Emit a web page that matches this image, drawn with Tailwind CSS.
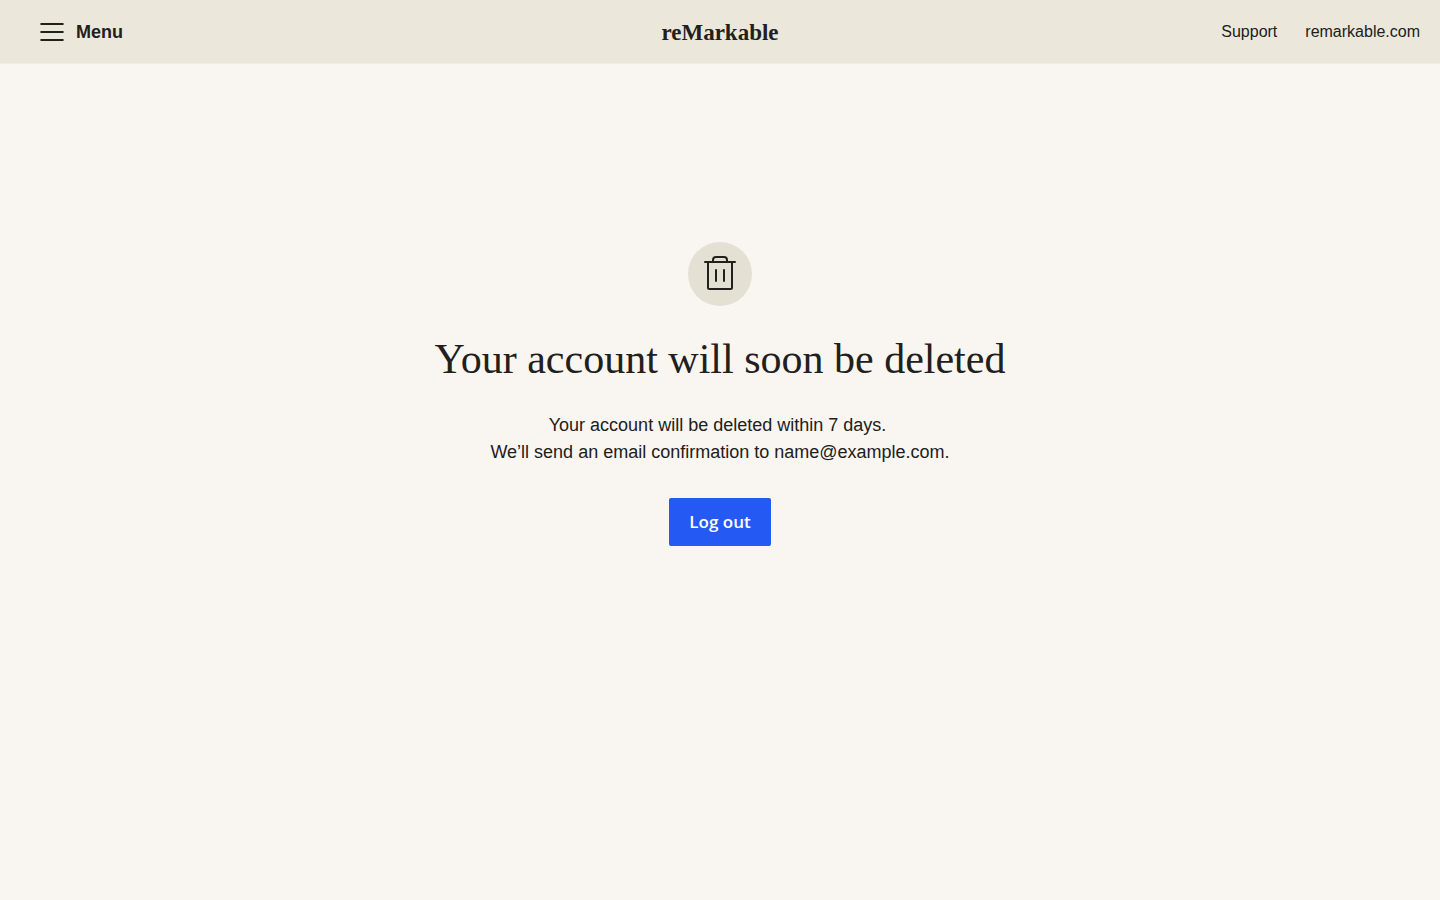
<!DOCTYPE html>
<html lang="en">
<head>
    <meta charset="UTF-8">
    <meta name="viewport" content="width=device-width, initial-scale=1.0">
    <title>Account deleted - reMarkable</title>
    <script src="https://cdn.jsdelivr.net/npm/@tailwindcss/browser@4"></script>
</head>

<body class="min-h-screen bg-[#f9f6f1] text-[#21201c] font-['Liberation_Sans',sans-serif]">
    <!-- Header -->
    <header class="flex items-center h-16 pl-10 pr-5 bg-[#ebe7db] border-b border-[#f1ede4]">
        <div class="flex-1 -mr-5">
            <button type="button" class="flex items-center gap-3 text-lg font-bold">
                <svg class="w-6 h-6" viewBox="0 0 24 24" fill="none" stroke="currentColor" stroke-width="2" stroke-linecap="round" aria-hidden="true">
                    <path d="M1.2 4h21.6M1.2 12h21.6M1.2 20h21.6" />
                </svg>
                Menu
            </button>
        </div>
        <a href="/" class="pt-1 text-[23px] font-bold font-['Liberation_Serif',serif]">reMarkable</a>
        <nav class="flex flex-1 justify-end gap-7 text-base">
            <a href="/support">Support</a>
            <a href="https://remarkable.com">remarkable.com</a>
        </nav>
    </header>

    <!-- Confirmation -->
    <main class="flex flex-col items-center px-4 pt-[178px] pb-12 text-center">
        <div class="flex items-center justify-center w-16 h-16 rounded-full bg-[#e5e0d4]">
            <svg class="w-10 h-10" viewBox="0 0 40 40" fill="none" stroke="currentColor" stroke-width="2" stroke-linecap="round" stroke-linejoin="round" aria-hidden="true">
                <path d="M5 8h30" />
                <path d="M13 8V6a3 3 0 0 1 3-3h8a3 3 0 0 1 3 3v2" />
                <path d="M8 8v25.500a1.500 1.500 0 0 0 1.500 1.500h21a1.500 1.500 0 0 0 1.500-1.500V8" />
                <path d="M16 16v11M24 16v11" />
            </svg>
        </div>
        <h1 class="mt-7 text-[42px] leading-[50px] font-['Liberation_Serif',serif]">Your account will soon be deleted</h1>
        <p class="mt-7 text-lg leading-[27px]">
            Your account will be deleted within 7 days.&nbsp;<br>
            We’ll send an email confirmation to name@example.com.
        </p>
        <button type="button" class="mt-8 h-12 px-5 rounded-xs bg-[#245af3] text-white text-[17px] font-semibold font-['Open_Sans',sans-serif]">Log out</button>
    </main>
</body>
</html>
